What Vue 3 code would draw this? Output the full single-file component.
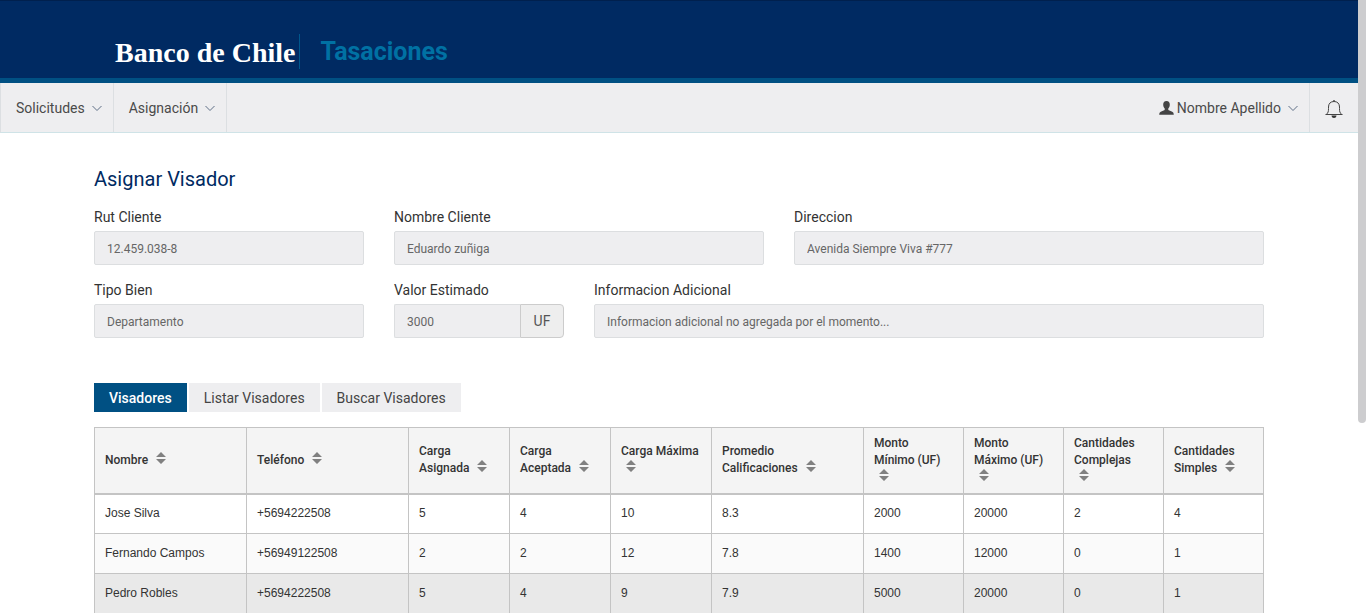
<script setup>
import { ref } from 'vue'

const tabs = ['Visadores', 'Listar Visadores', 'Buscar Visadores']
const activeTab = ref(0)

const menus = ['Solicitudes', 'Asignación']

const fields = [
  { id: 'rut', label: 'Rut Cliente', value: '12.459.038-8', span: 'span-3' },
  { id: 'nombre', label: 'Nombre Cliente', value: 'Eduardo zuñiga', span: 'span-4' },
  { id: 'direccion', label: 'Direccion', value: 'Avenida Siempre Viva #777', span: 'span-5' },
  { id: 'tipo', label: 'Tipo Bien', value: 'Departamento', span: 'span-3' },
  { id: 'valor', label: 'Valor Estimado', value: '3000', span: 'span-2', unit: 'UF' },
  { id: 'info', label: 'Informacion Adicional', value: 'Informacion adicional no agregada por el momento...', span: 'span-7' }
]

const columns = [
  { title: 'Nombre', size: 'w-name' },
  { title: 'Teléfono', size: 'w-phone' },
  { title: 'Carga Asignada', size: 'w-load' },
  { title: 'Carga Aceptada', size: 'w-load' },
  { title: 'Carga Máxima', size: 'w-load' },
  { title: 'Promedio Calificaciones', size: 'w-name' },
  { title: 'Monto Mínimo (UF)', size: 'w-amount' },
  { title: 'Monto Máximo (UF)', size: 'w-amount' },
  { title: 'Cantidades Complejas', size: 'w-amount' },
  { title: 'Cantidades Simples', size: 'w-amount' }
]

const rows = [
  ['Jose Silva', '+5694222508', '5', '4', '10', '8.3', '2000', '20000', '2', '4'],
  ['Fernando Campos', '+56949122508', '2', '2', '12', '7.8', '1400', '12000', '0', '1'],
  ['Pedro Robles', '+5694222508', '5', '4', '9', '7.9', '5000', '20000', '0', '1']
]
</script>

<template>
  <div class="page">
    <header class="top">
      <div class="brand">
        <a href="#" class="logo">Banco de Chile</a>
        <span class="product">Tasaciones</span>
      </div>
    </header>

    <nav class="nav">
      <button v-for="m in menus" :key="m" type="button" class="nav-item">
        {{ m }}
        <svg class="chevron" viewBox="0 0 10 10" aria-hidden="true"><path d="M.5 3l4.500 4.500L9.500 3" /></svg>
      </button>
      <button type="button" class="nav-item user">
        <svg class="person" viewBox="0 0 15 14" aria-hidden="true">
          <path d="M7.500 0C5.300 0 4.100 1.500 4.200 3.700C4.300 5.600 4.900 6.600 5.700 7.500V9L1.800 10.700C.7 11.200.3 12 .2 13.800H14.800C14.700 12 14.300 11.200 13.200 10.700L9.300 9V7.500C10.100 6.600 10.700 5.600 10.800 3.700C10.900 1.500 9.700 0 7.500 0Z" />
        </svg>
        Nombre Apellido
        <svg class="chevron" viewBox="0 0 10 10" aria-hidden="true"><path d="M.5 3l4.500 4.500L9.500 3" /></svg>
      </button>
      <button type="button" class="nav-item bell" aria-label="Notificaciones">
        <svg class="bell-icon" viewBox="0 0 18 18" aria-hidden="true">
          <path class="line" d="M.5 14.500H17.500M1.500 14.200C3.200 12.800 3.500 11.500 3.500 8.500V7C3.500 3.500 5.600 1.500 9 1.500S14.500 3.500 14.500 7V8.500C14.500 11.500 14.800 12.800 16.500 14.200M8 .8H10" />
          <path d="M6.500 15.500H11.500C11.300 17.200 10.400 18 9 18S6.700 17.200 6.500 15.500Z" />
        </svg>
      </button>
    </nav>

    <main class="content">
      <h1>Asignar Visador</h1>

      <form class="fields" @submit.prevent>
        <div v-for="f in fields" :key="f.id" class="field" :class="f.span">
          <label :for="f.id">{{ f.label }}</label>
          <div class="control">
            <input :id="f.id" type="text" :value="f.value" readonly :class="{ joined: f.unit }" />
            <span v-if="f.unit" class="unit">{{ f.unit }}</span>
          </div>
        </div>
      </form>

      <div class="tabs" role="tablist">
        <button
          v-for="(t, i) in tabs"
          :key="t"
          type="button"
          role="tab"
          class="tab"
          :class="{ active: i === activeTab }"
          :aria-selected="i === activeTab"
          @click="activeTab = i"
        >{{ t }}</button>
      </div>

      <table>
        <colgroup>
          <col v-for="c in columns" :key="c.title" :class="c.size" />
        </colgroup>
        <thead>
          <tr>
            <th v-for="c in columns" :key="c.title" scope="col" :class="{ tight: c.size !== 'w-load' }">
              {{ c.title }}
              <svg class="sort" viewBox="0 0 10 12" aria-hidden="true"><path d="M5 0L10 5H0ZM0 7H10L5 12Z" /></svg>
            </th>
          </tr>
        </thead>
        <tbody>
          <tr v-for="r in rows" :key="r[0]">
            <td v-for="(cell, i) in r" :key="i">{{ cell }}</td>
          </tr>
        </tbody>
      </table>
    </main>

    <div class="scroll-thumb" aria-hidden="true"></div>
  </div>
</template>

<style>
html,
body {
  background: #fff;
}
</style>

<style scoped>
.page {
  box-sizing: border-box;
  height: 100vh;
  overflow-y: auto;
  scrollbar-width: none;
  padding-right: 8px;
  font-family: Roboto, "Liberation Sans", sans-serif;
  font-size: 14px;
  line-height: 20px;
  color: #333;
}

.page *,
.page *::before {
  box-sizing: border-box;
}

button,
input {
  font: inherit;
  margin: 0;
}

.top {
  height: 83px;
  padding: 32px 115px 0;
  background: #002a62;
  border-top: 1px solid #00204e;
  border-bottom: 5px solid #005083;
}

.brand {
  display: flex;
  align-items: center;
  height: 36px;
}

.logo {
  padding: 3px 4px 0 0;
  border-right: 1px solid #00578c;
  font-family: "Liberation Serif", serif;
  font-size: 28px;
  font-weight: 700;
  line-height: 32px;
  color: #fff;
  text-decoration: none;
  white-space: nowrap;
}

.product {
  padding-left: 20px;
  font-size: 25px;
  font-weight: 700;
  line-height: 36px;
  padding-top: 2px;
  color: #0071a3;
}

.nav {
  display: flex;
  height: 50px;
  background: #eeeef0;
  border-bottom: 1px solid #cfe3e7;
  border-left: 1px solid #dcdfe2;
}

.nav-item {
  display: flex;
  align-items: center;
  padding: 0 11px 0 15px;
  border: 0;
  border-right: 1px solid #dcdfe2;
  background: none;
  color: #4a4a4a;
  white-space: nowrap;
}

.user {
  margin-left: auto;
}

.bell {
  border-right: 0;
  padding: 3px 15px 0;
}

.chevron {
  width: 10px;
  height: 10px;
  margin-left: 7px;
  fill: none;
  stroke: #5e6f86;
}

.person {
  width: 15px;
  height: 14px;
  margin-right: 3px;
  fill: #444;
}

.bell-icon {
  width: 18px;
  height: 18px;
  fill: #333;
}

.bell-icon .line {
  fill: none;
  stroke: #444;
}

.content {
  max-width: 1170px;
  margin: 0 auto;
}

h1 {
  margin: 0;
  padding-top: 34px;
  font-size: 20px;
  font-weight: 400;
  line-height: 24px;
  color: #002a62;
}

.fields {
  display: grid;
  grid-template-columns: repeat(12, minmax(0, 1fr));
  gap: 15px 30px;
  padding-top: 16px;
}

.span-2 { grid-column: span 2; }
.span-3 { grid-column: span 3; }
.span-4 { grid-column: span 4; }
.span-5 { grid-column: span 5; }
.span-7 { grid-column: span 7; }

.field label {
  display: block;
  height: 24px;
  color: #333;
}

.control {
  display: flex;
}

input {
  flex: 1;
  min-width: 0;
  height: 34px;
  padding: 2px 12px 0;
  border: 1px solid #dcdee0;
  border-radius: 2px;
  background: #eeeef0;
  color: #666;
  font-size: 12px;
}

.joined {
  border-right: 0;
  border-radius: 2px 0 0 2px;
}

.unit {
  min-width: 44px;
  border: 1px solid #ccc;
  border-radius: 0 4px 4px 0;
  background: #eee;
  color: #555;
  line-height: 32px;
  text-align: center;
}

.tabs {
  display: flex;
  gap: 2px;
  margin: 45px 0 15px;
}

.tab {
  height: 29px;
  padding: 0 15px;
  border: 0;
  background: #eeeef0;
  color: #444;
}

.active {
  background: #005083;
  color: #fff;
  font-weight: 500;
}

table {
  width: 100%;
  table-layout: fixed;
  border-collapse: collapse;
  font-size: 12px;
  line-height: 17px;
}

.w-name { width: 152px; }
.w-phone { width: 162px; }
.w-load { width: 101px; }
.w-amount { width: 100px; }

th,
td {
  border: 1px solid #c4c4c4;
  padding: 0 10px;
  text-align: left;
  vertical-align: middle;
}

th {
  height: 66px;
  border-bottom-width: 2px;
  background: #f4f4f4;
  font-weight: 500;
}

.tight {
  padding-right: 16px;
}

.sort {
  width: 10px;
  height: 12px;
  margin-left: 5px;
  fill: #808080;
}

td {
  height: 40px;
  font-family: "Liberation Sans", Arial, sans-serif;
}

tbody tr:nth-child(2) {
  background: #fafafa;
}

tbody tr:nth-child(3) {
  background: #e9e9e9;
}

.scroll-thumb {
  position: fixed;
  top: 0;
  right: 0;
  width: 8px;
  height: 69vh;
  border-radius: 0 0 4px 4px;
  background: #cdcdcf;
}
</style>
